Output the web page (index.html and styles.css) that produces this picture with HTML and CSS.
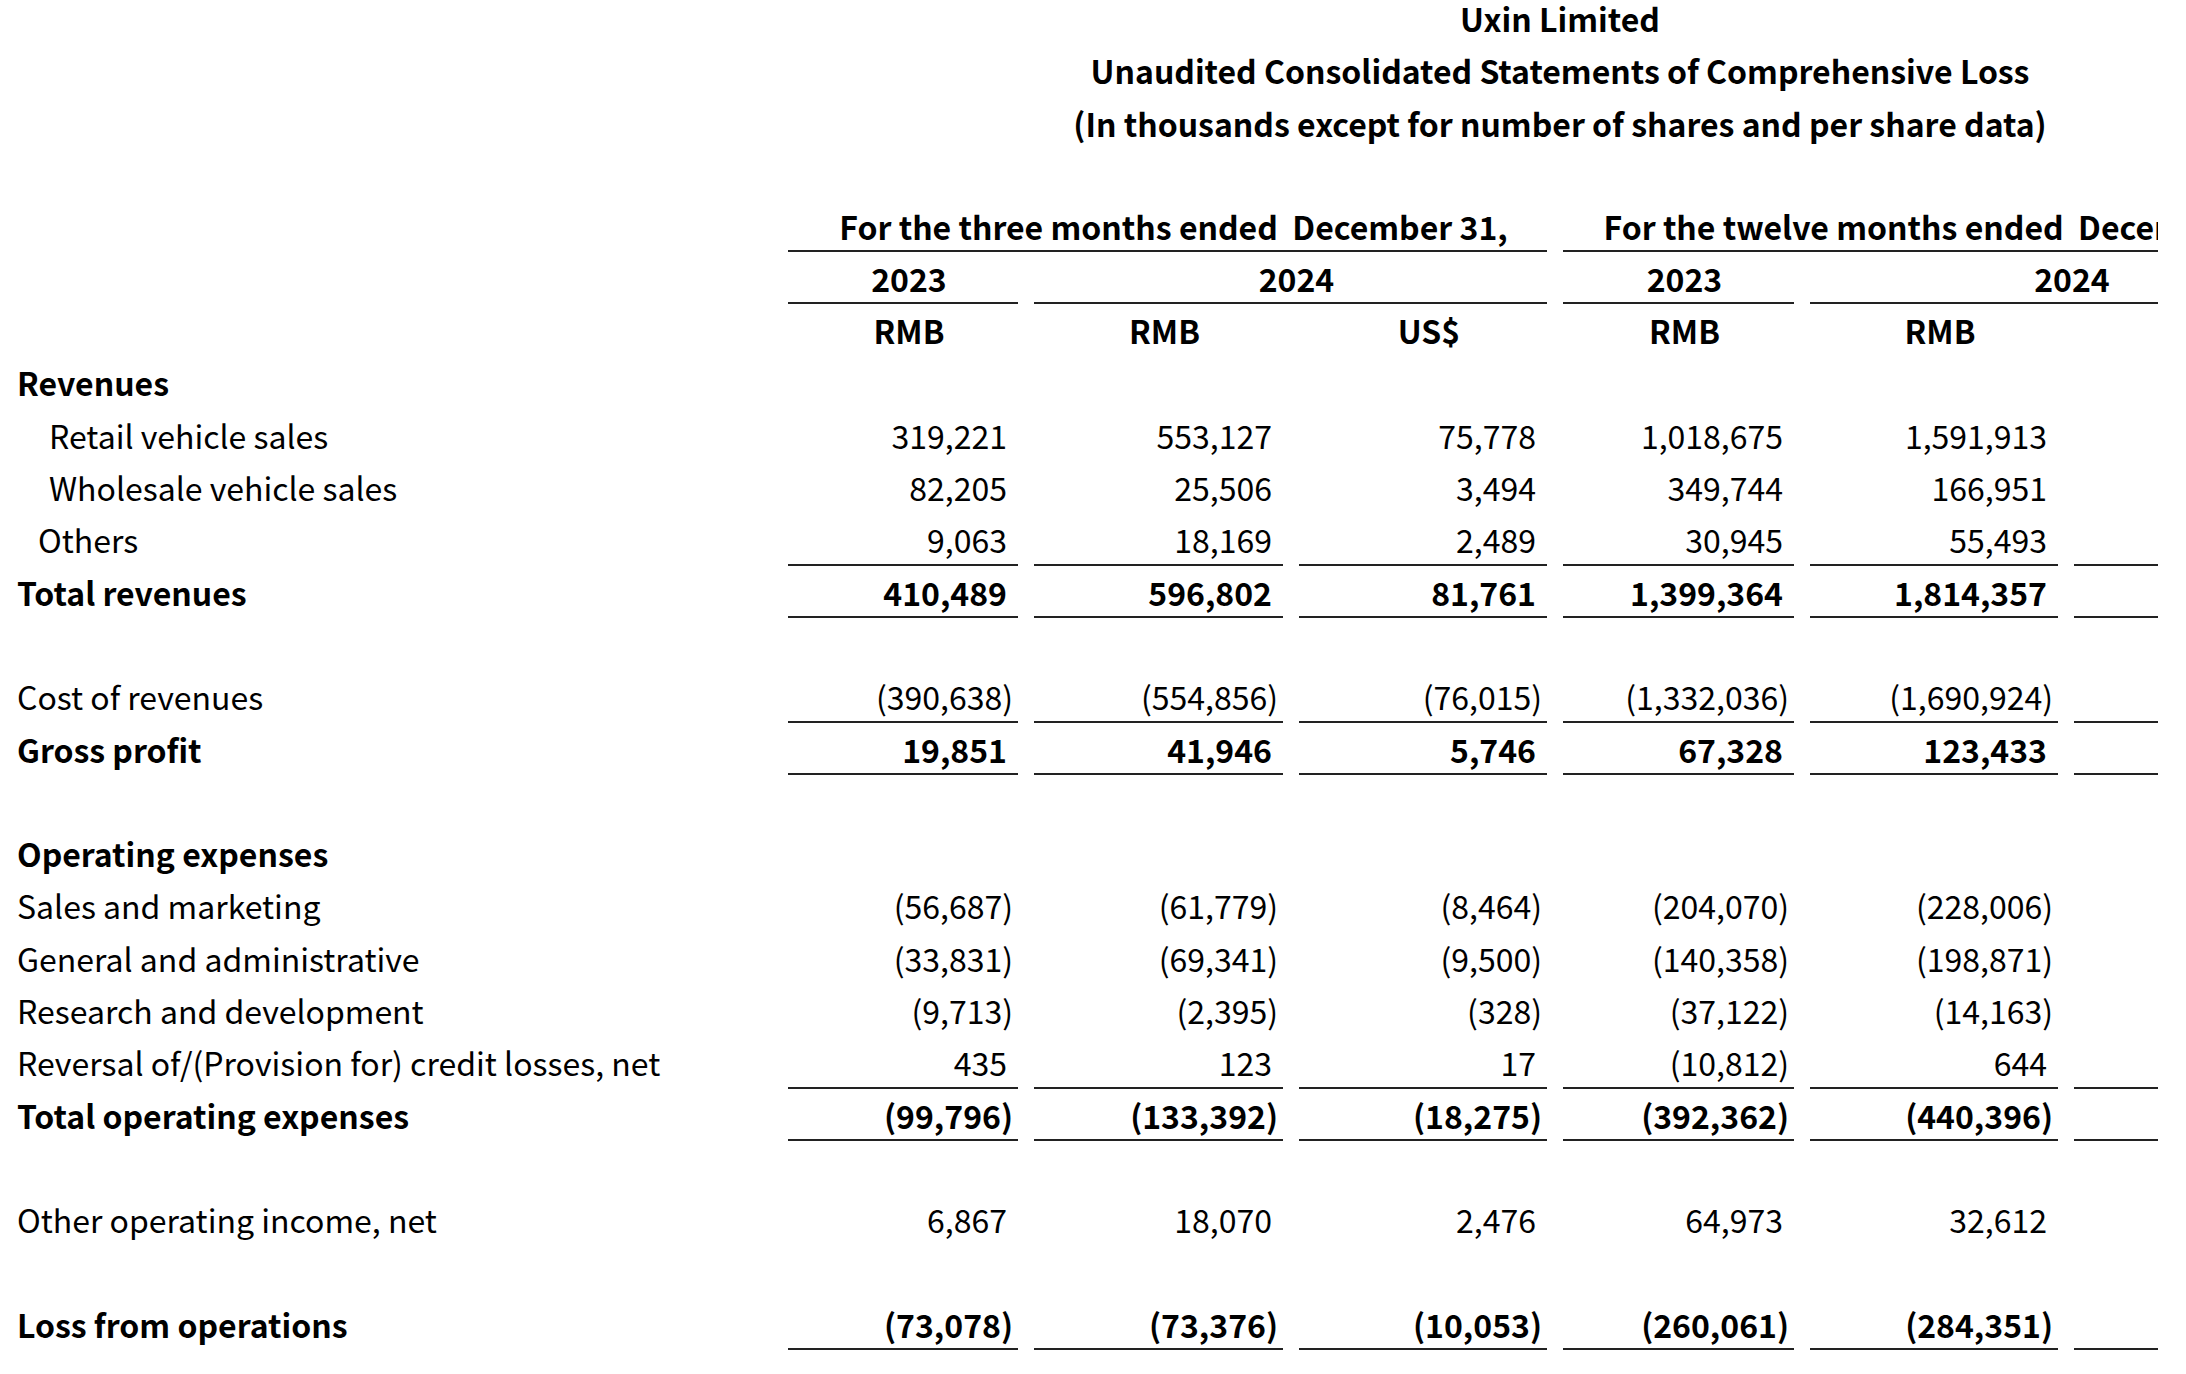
FILE: index.html
```html
<!DOCTYPE html>
<html lang="en">
<head>
<meta charset="utf-8">
<title>Uxin Limited - Unaudited Consolidated Statements of Comprehensive Loss</title>
<link rel="stylesheet" href="styles.css">
</head>
<body>
<div class="viewport">
  <div class="sheet">
    <div class="title">
      <div class="tline first">Uxin Limited</div>
      <div class="tline">Unaudited Consolidated Statements of Comprehensive Loss</div>
      <div class="tline">(In thousands except for number of shares and per share data)</div>
    </div>
    <div class="row"></div>

    <div class="row hdr">
      <div class="lab"></div>
      <div class="c u span3">For the three months ended&nbsp;&nbsp;December 31,</div>
      <div class="c u span3b">For the twelve months ended&nbsp;&nbsp;December 31,</div>
    </div>
    <div class="row hdr">
      <div class="lab"></div>
      <div class="c u">2023</div>
      <div class="c u span2">2024</div>
      <div class="c u">2023</div>
      <div class="c u span2b">2024</div>
    </div>
    <div class="row hdr">
      <div class="lab"></div>
      <div class="c">RMB</div>
      <div class="c">RMB</div>
      <div class="c">US$</div>
      <div class="c">RMB</div>
      <div class="c">RMB</div>
      <div class="c"></div>
    </div>

    <div class="row b"><div class="lab">Revenues</div></div>
    <div class="row">
      <div class="lab ind2">Retail vehicle sales</div>
      <div class="n">319,221</div><div class="n">553,127</div><div class="n">75,778</div><div class="n">1,018,675</div><div class="n">1,591,913</div><div class="n"></div>
    </div>
    <div class="row">
      <div class="lab ind2">Wholesale vehicle sales</div>
      <div class="n">82,205</div><div class="n">25,506</div><div class="n">3,494</div><div class="n">349,744</div><div class="n">166,951</div><div class="n"></div>
    </div>
    <div class="row">
      <div class="lab ind1">Others</div>
      <div class="n u">9,063</div><div class="n u">18,169</div><div class="n u">2,489</div><div class="n u">30,945</div><div class="n u">55,493</div><div class="n u"></div>
    </div>
    <div class="row b">
      <div class="lab">Total revenues</div>
      <div class="n u">410,489</div><div class="n u">596,802</div><div class="n u">81,761</div><div class="n u">1,399,364</div><div class="n u">1,814,357</div><div class="n u"></div>
    </div>
    <div class="row"></div>
    <div class="row">
      <div class="lab">Cost of revenues</div>
      <div class="n neg u">(390,638)</div><div class="n neg u">(554,856)</div><div class="n neg u">(76,015)</div><div class="n neg u">(1,332,036)</div><div class="n neg u">(1,690,924)</div><div class="n u"></div>
    </div>
    <div class="row b">
      <div class="lab">Gross profit</div>
      <div class="n u">19,851</div><div class="n u">41,946</div><div class="n u">5,746</div><div class="n u">67,328</div><div class="n u">123,433</div><div class="n u"></div>
    </div>
    <div class="row"></div>
    <div class="row b"><div class="lab">Operating expenses</div></div>
    <div class="row">
      <div class="lab">Sales and marketing</div>
      <div class="n neg">(56,687)</div><div class="n neg">(61,779)</div><div class="n neg">(8,464)</div><div class="n neg">(204,070)</div><div class="n neg">(228,006)</div><div class="n"></div>
    </div>
    <div class="row">
      <div class="lab">General and administrative</div>
      <div class="n neg">(33,831)</div><div class="n neg">(69,341)</div><div class="n neg">(9,500)</div><div class="n neg">(140,358)</div><div class="n neg">(198,871)</div><div class="n"></div>
    </div>
    <div class="row">
      <div class="lab">Research and development</div>
      <div class="n neg">(9,713)</div><div class="n neg">(2,395)</div><div class="n neg">(328)</div><div class="n neg">(37,122)</div><div class="n neg">(14,163)</div><div class="n"></div>
    </div>
    <div class="row">
      <div class="lab">Reversal of/(Provision for) credit losses, net</div>
      <div class="n u">435</div><div class="n u">123</div><div class="n u">17</div><div class="n neg u">(10,812)</div><div class="n u">644</div><div class="n u"></div>
    </div>
    <div class="row b">
      <div class="lab">Total operating expenses</div>
      <div class="n neg u">(99,796)</div><div class="n neg u">(133,392)</div><div class="n neg u">(18,275)</div><div class="n neg u">(392,362)</div><div class="n neg u">(440,396)</div><div class="n u"></div>
    </div>
    <div class="row"></div>
    <div class="row">
      <div class="lab">Other operating income, net</div>
      <div class="n">6,867</div><div class="n">18,070</div><div class="n">2,476</div><div class="n">64,973</div><div class="n">32,612</div><div class="n"></div>
    </div>
    <div class="row"></div>
    <div class="row b">
      <div class="lab">Loss from operations</div>
      <div class="n neg u">(73,078)</div><div class="n neg u">(73,376)</div><div class="n neg u">(10,053)</div><div class="n neg u">(260,061)</div><div class="n neg u">(284,351)</div><div class="n u"></div>
    </div>
  </div>
</div>
</body>
</html>
```
FILE: styles.css
```css
html, body {
  margin: 0;
  padding: 0;
  background: #ffffff;
}

body {
  font-family: "Noto Sans CJK SC", "Source Sans Pro", "Noto Sans", sans-serif;
  color: #000000;
  font-size: 32px;
}

.viewport {
  width: 2158px;
  height: 1374px;
  overflow: hidden;
}

.sheet {
  width: 3120px;
}

.title {
  display: flex;
  flex-direction: column;
  font-weight: 700;
  font-size: 32px;
}

.tline {
  height: 52.3px;
  box-sizing: border-box;
  display: flex;
  align-items: center;
  justify-content: center;
  line-height: 1;
  white-space: nowrap;
}

.tline.first {
  height: 44.15px;
  padding-bottom: 8px;
}

.row {
  height: 52.3px;
  display: grid;
  grid-template-columns: 772px 230px 249px 248px 231px 248px 248px;
  column-gap: 16px;
  align-items: start;
}

.row.b {
  font-weight: 700;
}

.hdr {
  font-weight: 700;
  font-size: 32px;
}

.lab {
  height: 51px;
  box-sizing: border-box;
  border-bottom: 2px solid transparent;
  display: flex;
  align-items: center;
  padding-left: 17px;
  line-height: 1;
  white-space: nowrap;
}

.lab.ind1 { padding-left: 38px; }
.lab.ind2 { padding-left: 49px; }

.c, .n {
  height: 51px;
  box-sizing: border-box;
  border-bottom: 2px solid transparent;
  display: flex;
  align-items: center;
  line-height: 1;
  white-space: nowrap;
}

.c {
  justify-content: center;
  padding-left: 12px;
}

.n {
  justify-content: flex-end;
  padding-right: 11px;
}

.n.neg {
  padding-right: 5px;
}

.u {
  border-bottom-color: #222222;
}

.span3 { grid-column: 2 / 5; }
.span3b { grid-column: 5 / 8; }
.span2 { grid-column: 3 / 5; }
.span2b { grid-column: 6 / 8; }
```
